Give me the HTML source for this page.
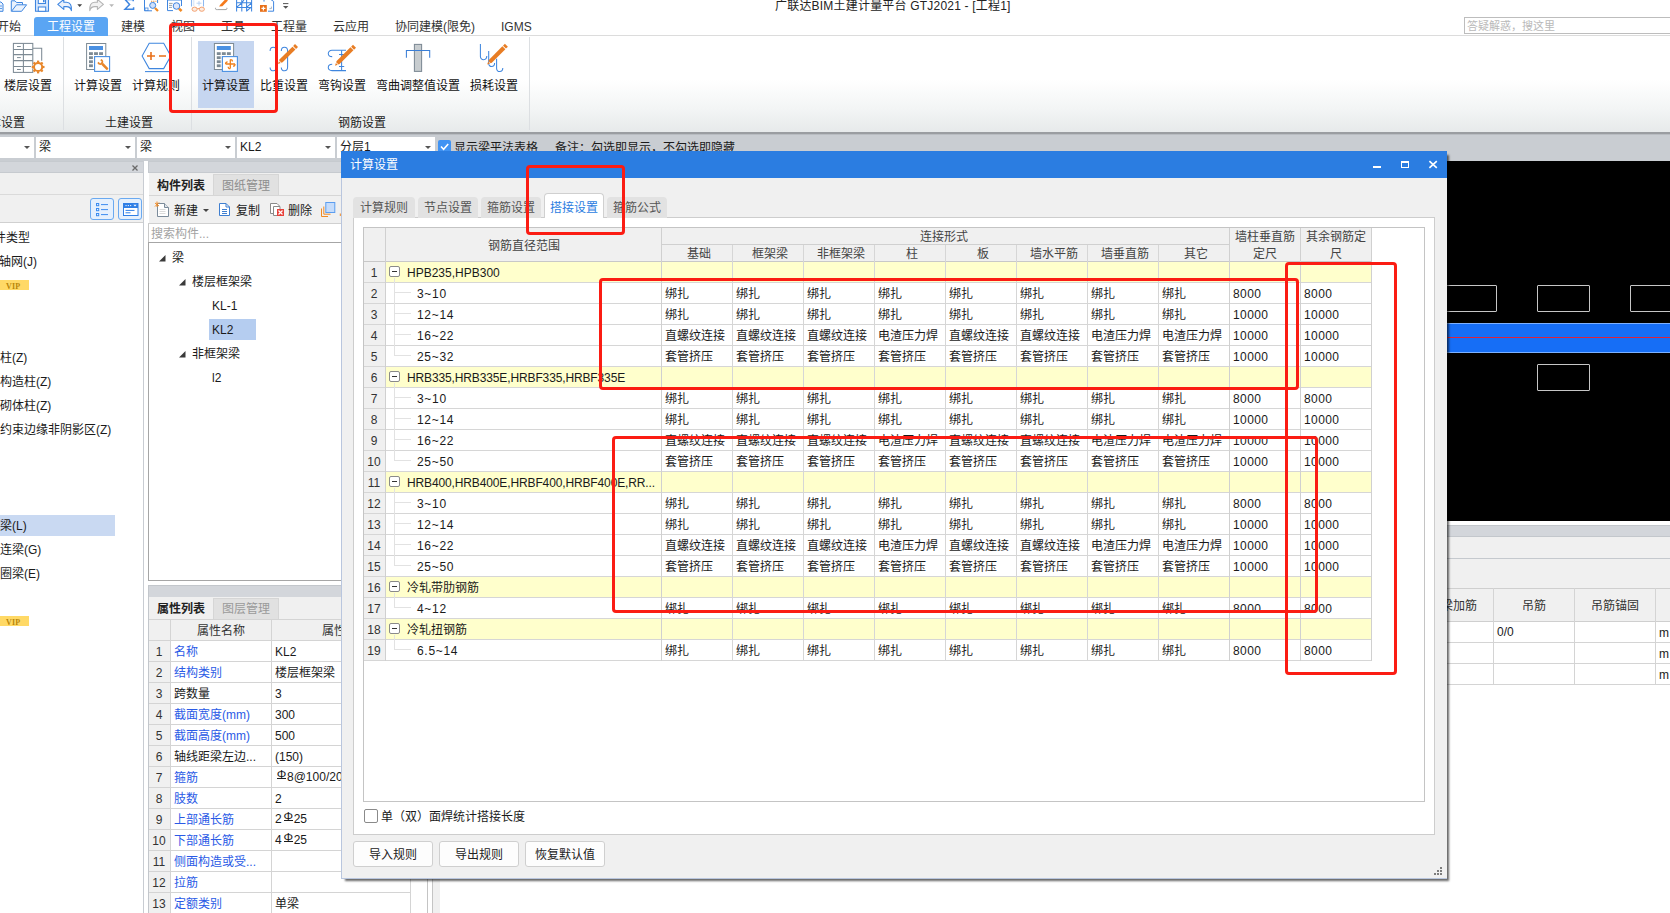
<!DOCTYPE html><html lang="zh-CN"><head><meta charset="utf-8"><title>计算设置</title><style>
*{box-sizing:border-box;margin:0;padding:0}
html,body{width:1670px;height:913px;overflow:hidden;background:#fff}
body{position:relative;font-family:"Liberation Sans","Noto Sans CJK SC",sans-serif;font-size:12px;color:#1a1a1a;line-height:16px}
.a{position:absolute}
.t{position:absolute;white-space:nowrap;line-height:16px;height:16px}
.c{text-align:center}
.r{text-align:right}
.b{font-weight:bold}
.blue{color:#2a5ae6}
.gray{color:#8c8c8c}
.red{position:absolute;border:3px solid #fb1c13;border-radius:4px;background:transparent}
.combo{position:absolute;background:#fff;height:21px;top:137px}
.combo span{position:absolute;left:3px;top:2px;line-height:16px}
.combo i{position:absolute;right:4px;top:9px;width:0;height:0;border-left:3px solid transparent;border-right:3px solid transparent;border-top:3.5px solid #555}
.tab{position:absolute;top:197px;height:21px;background:#e2e2e2;color:#555;border-radius:4px 4px 0 0;text-align:center;line-height:22px;width:62px}
.tabA{position:absolute;top:193px;height:25px;background:#fff;color:#2b7de1;border:1px solid #d0d0d0;border-bottom:none;border-radius:4px 4px 0 0;text-align:center;line-height:26px;padding-top:1px;width:60px}
.btn{position:absolute;top:841px;height:26px;width:80px;background:#fdfdfd;border:1px solid #cfcfcf;border-radius:3px;text-align:center;line-height:26px;color:#222}
.sym{display:inline-block;position:relative;margin-left:1px;width:11px;height:10px;vertical-align:top}
.sym i{position:absolute;left:0px;top:-1px;font-style:normal;font-size:12px;line-height:12px;width:11px;text-align:center;transform:scaleY(0.9);transform-origin:50% 100%}
.sym::after{content:"";position:absolute;left:1px;top:9px;width:9px;height:1px;background:#1a1a1a}
.hl{position:absolute;height:1px;background:#d4d4d4}
.vl{position:absolute;width:1px;background:#d4d4d4}
</style></head><body><div class="a" style="left:0px;top:0px;width:1670px;height:36px;background:#fff"></div><div class="t " style="left:775px;top:-2px;color:#222;letter-spacing:0.2px">广联达BIM土建计量平台 GTJ2021 - [工程1]</div><div class="t " style="left:-3px;top:19px;color:#333">开始</div><div class="t " style="left:47px;top:19px;color:#fff">工程设置</div><div class="t " style="left:121px;top:19px;color:#333">建模</div><div class="t " style="left:171px;top:19px;color:#333">视图</div><div class="t " style="left:221px;top:19px;color:#333">工具</div><div class="t " style="left:271px;top:19px;color:#333">工程量</div><div class="t " style="left:333px;top:19px;color:#333">云应用</div><div class="t " style="left:395px;top:19px;color:#333">协同建模(限免)</div><div class="t " style="left:501px;top:19px;color:#333">IGMS</div><div class="hl" style="left:0px;top:35px;width:1670px;background:#dcdcdc"></div><div class="a" style="left:34px;top:17px;width:74px;height:19px;background:#5aa5f3;border-radius:3px 3px 0 0"></div><div class="t " style="left:47px;top:19px;color:#fff">工程设置</div><div class="a" style="left:1464px;top:17px;width:210px;height:17px;background:#fff;border:1px solid #bdbdbd"></div><div class="t " style="left:1467px;top:18px;color:#b9b9b9;font-size:11px">答疑解惑，搜这里</div><div class="a" style="left:0px;top:36px;width:1670px;height:97px;background:linear-gradient(#ffffff 0%,#ffffff 45%,#f3f5f5 75%,#e6e9ea 100%)"></div><div class="a" style="left:0px;top:132px;width:1670px;height:2px;background:#9a9da1"></div><div class="a" style="left:0px;top:134px;width:1670px;height:1px;background:#b8bcc1"></div><div class="vl" style="left:63px;top:37px;height:93px;background:#dcdfe2"></div><div class="vl" style="left:191px;top:37px;height:93px;background:#dcdfe2"></div><div class="vl" style="left:529px;top:37px;height:93px;background:#dcdfe2"></div><div class="a" style="left:198px;top:41px;width:56px;height:67px;background:#c6d6f0"></div><div class="t c " style="left:-122px;top:78px;width:300px;color:#111">楼层设置</div><div class="t c " style="left:-52px;top:78px;width:300px;color:#111">计算设置</div><div class="t c " style="left:6px;top:78px;width:300px;color:#111">计算规则</div><div class="t c " style="left:76px;top:78px;width:300px;color:#111">计算设置</div><div class="t c " style="left:134px;top:78px;width:300px;color:#111">比重设置</div><div class="t c " style="left:192px;top:78px;width:300px;color:#111">弯钩设置</div><div class="t c " style="left:268px;top:78px;width:300px;color:#111">弯曲调整值设置</div><div class="t c " style="left:344px;top:78px;width:300px;color:#111">损耗设置</div><div class="t " style="left:-23px;top:115px;color:#222">基本设置</div><div class="t c " style="left:-21px;top:115px;width:300px;color:#222">土建设置</div><div class="t c " style="left:212px;top:115px;width:300px;color:#222">钢筋设置</div><svg class="a" style="left:0;top:0" width="560" height="134" viewBox="0 0 560 134"><g fill="none" stroke="#7d8a94" stroke-width="1.05"><path d="M32.8 48.3 H41.7 V60.8"/><rect x="13.4" y="43.4" width="19.4" height="29"/><path d="M23.4 43.4 V72.4 M13.4 49.5 H32.8 M13.4 54.6 H32.8 M13.4 60.6 H32.8 M13.4 66.4 H31"/><path d="M17 46.5 H20.8 M17 57.6 H20.8 M17 69.5 H20.8" stroke-width="1"/></g><circle cx="38.1" cy="67.0" r="5.6" fill="#fff"/><circle cx="38.1" cy="67.0" r="4.1" fill="none" stroke="#e8862a" stroke-width="2"/><rect x="-1.10" y="-1.00" width="2.2" height="2" fill="#e8862a" transform="translate(43.50,67.00) rotate(90.0)"/><rect x="-1.10" y="-1.00" width="2.2" height="2" fill="#e8862a" transform="translate(41.92,70.82) rotate(135.0)"/><rect x="-1.10" y="-1.00" width="2.2" height="2" fill="#e8862a" transform="translate(38.10,72.40) rotate(180.0)"/><rect x="-1.10" y="-1.00" width="2.2" height="2" fill="#e8862a" transform="translate(34.28,70.82) rotate(225.0)"/><rect x="-1.10" y="-1.00" width="2.2" height="2" fill="#e8862a" transform="translate(32.70,67.00) rotate(270.0)"/><rect x="-1.10" y="-1.00" width="2.2" height="2" fill="#e8862a" transform="translate(34.28,63.18) rotate(315.0)"/><rect x="-1.10" y="-1.00" width="2.2" height="2" fill="#e8862a" transform="translate(38.10,61.60) rotate(360.0)"/><rect x="-1.10" y="-1.00" width="2.2" height="2" fill="#e8862a" transform="translate(41.92,63.18) rotate(405.0)"/><rect x="86.6" y="43.5" width="19.2" height="26" fill="#fff" stroke="#7d8a94" stroke-width="1"/><rect x="89" y="46" width="14" height="4" fill="#4a90e2"/><rect x="89.00" y="52.20" width="3.9" height="2.8" fill="#7d8a94"/><rect x="94.05" y="52.20" width="3.9" height="2.8" fill="#7d8a94"/><rect x="99.10" y="52.20" width="3.9" height="2.8" fill="#7d8a94"/><rect x="89.00" y="56.25" width="3.9" height="2.8" fill="#7d8a94"/><rect x="94.05" y="56.25" width="3.9" height="2.8" fill="#7d8a94"/><rect x="99.10" y="56.25" width="3.9" height="2.8" fill="#7d8a94"/><rect x="89.00" y="60.30" width="3.9" height="2.8" fill="#7d8a94"/><rect x="94.05" y="60.30" width="3.9" height="2.8" fill="#7d8a94"/><rect x="99.10" y="60.30" width="3.9" height="2.8" fill="#7d8a94"/><rect x="89.00" y="64.35" width="3.9" height="2.8" fill="#7d8a94"/><rect x="94.05" y="64.35" width="3.9" height="2.8" fill="#7d8a94"/><rect x="99.10" y="64.35" width="3.9" height="2.8" fill="#7d8a94"/><rect x="94.6" y="56.6" width="15" height="14.8" fill="#fff" stroke="#4a90e2" stroke-width="1.1"/><g transform="translate(102.8,64.4) rotate(-45)"><rect x="-1.25" y="-1" width="2.5" height="8" rx="0.8" fill="#e8862a"/><path d="M-2.9 -4.8 A3.1 3.1 0 1 0 2.9 -4.8 L1.2 -4.8 L1.2 -2.6 L-1.2 -2.6 L-1.2 -4.8 Z" fill="#e8862a"/></g><path d="M142.1 56 L149.2 43.3 H163.7 L170.8 56 L163.7 68.6 H149.2 Z" fill="none" stroke="#3f86de" stroke-width="1.05"/><path d="M145 71.6 H170" stroke="#3f86de" stroke-width="1.05"/><path d="M147 56 H155 M151 52 V60 M159 56 H166" stroke="#e8701a" stroke-width="1.6" fill="none"/><rect x="214.4" y="43.5" width="19.2" height="26" fill="#fff" stroke="#7d8a94" stroke-width="1"/><rect x="216.8" y="46" width="14" height="4" fill="#4a90e2"/><rect x="216.80" y="52.20" width="3.9" height="2.8" fill="#7d8a94"/><rect x="221.85" y="52.20" width="3.9" height="2.8" fill="#7d8a94"/><rect x="226.90" y="52.20" width="3.9" height="2.8" fill="#7d8a94"/><rect x="216.80" y="56.25" width="3.9" height="2.8" fill="#7d8a94"/><rect x="221.85" y="56.25" width="3.9" height="2.8" fill="#7d8a94"/><rect x="226.90" y="56.25" width="3.9" height="2.8" fill="#7d8a94"/><rect x="216.80" y="60.30" width="3.9" height="2.8" fill="#7d8a94"/><rect x="221.85" y="60.30" width="3.9" height="2.8" fill="#7d8a94"/><rect x="226.90" y="60.30" width="3.9" height="2.8" fill="#7d8a94"/><rect x="216.80" y="64.35" width="3.9" height="2.8" fill="#7d8a94"/><rect x="221.85" y="64.35" width="3.9" height="2.8" fill="#7d8a94"/><rect x="226.90" y="64.35" width="3.9" height="2.8" fill="#7d8a94"/><rect x="222.4" y="56.6" width="15" height="14.8" fill="#fff" stroke="#4a90e2" stroke-width="1.1"/><g fill="none" stroke="#f0801c" stroke-width="1.3"><path d="M225.6 64 H235 M230.3 59.6 V68.6"/><path d="M227.6 61.8 q-2 0 -2 2.2 M233 66.2 q2 0 2 -2.2 M232.4 61.4 q0 -1.9 -2.1 -1.8 M228.2 66.8 q0 1.9 2.1 1.8"/></g><path d="M270.09999999999997 51 C270.09999999999997 46 276.4 46 276.4 51 V67 C276.4 72 270.09999999999997 72 270.09999999999997 67.5" fill="none" stroke="#3f86de" stroke-width="1.05"/><path d="M281.3 51 C281.3 46 287.6 46 287.6 51 V67 C287.6 72 281.3 72 281.3 67.5" fill="none" stroke="#3f86de" stroke-width="1.05"/><polygon points="278.00,63.90 280.76,63.00 278.93,61.15" fill="#e87d24"/><polygon points="281.53,62.77 282.60,62.30 295.42,49.62 292.46,46.64 279.65,59.31 279.16,60.38" fill="#e87d24"/><polygon points="296.06,48.99 297.98,47.09 295.02,44.11 293.10,46.01" fill="#e87d24"/><g fill="none" stroke="#3f86de" stroke-width="1.05"><path d="M346 50.3 H332 C327 50.3 327 56.6 332.2 56.6"/><path d="M346 70.6 H332 C327 70.6 327 64.3 332.2 64.3"/><path d="M341.6 50.3 V70.6 M339 54.5 H344.2 M339 66.5 H344.2"/></g><polygon points="335.00,65.70 337.76,64.79 335.92,62.94" fill="#e87d24"/><polygon points="338.52,64.56 339.60,64.09 353.43,50.33 350.47,47.35 336.64,61.11 336.15,62.18" fill="#e87d24"/><polygon points="354.07,49.69 355.98,47.79 353.02,44.81 351.10,46.72" fill="#e87d24"/><rect x="414.4" y="44.4" width="7.2" height="27" fill="#c7cccf" stroke="#7d8a94" stroke-width="1.05"/><path d="M406.4 57.8 V50.4 H429.7 V57.8" fill="none" stroke="#3a7ed6" stroke-width="1.05"/><g fill="none" stroke="#3f86de" stroke-width="1.05"><path d="M480.4 44 V56.6 C480.4 60.8 486.8 60.8 486.8 56"/><path d="M488.7 51 V63.4 C488.7 67.6 494.6 67.6 494.6 63"/><path d="M496.6 58.7 V68.5 C496.6 72.7 502.8 72.7 502.8 68"/></g><polygon points="487.20,64.50 489.96,63.58 488.11,61.74" fill="#e87d24"/><polygon points="490.72,63.35 491.79,62.86 505.35,49.23 502.37,46.27 488.81,59.90 488.34,60.98" fill="#e87d24"/><polygon points="505.98,48.60 507.89,46.68 504.91,43.72 503.01,45.63" fill="#e87d24"/></svg><svg class="a" style="left:0;top:0" width="300" height="14" viewBox="0 0 300 14"><path d="M-3 2 H1 L3 4 V11.3 H-3" fill="#eaf2fd" stroke="#3f86e0" stroke-width="1"/><path d="M-2 6 H2 M-2 8.5 H2" stroke="#3f86e0" stroke-width="0.8"/><path d="M11.3 11.3 V0.8 H15 L16.5 2.5 H22.5 V4.8" fill="#eaf2fd" stroke="#3f86e0" stroke-width="1"/><path d="M11.5 11.3 L16.5 4.8 H26.6 L21.6 11.3 Z" fill="#eaf2fd" stroke="#3f86e0" stroke-width="1"/><path d="M35.5 -1 V11.3 H48.5 V-1" fill="#d9e8fc" stroke="#3f86e0" stroke-width="1.1"/><rect x="38.3" y="-1" width="7.2" height="4.5" fill="#fff" stroke="#3f86e0" stroke-width="1.05"/><rect x="43" y="-1" width="1.6" height="3.2" fill="#3f86e0"/><rect x="38.3" y="7" width="7.4" height="4.3" fill="#fff" stroke="#3f86e0" stroke-width="1.05"/><path d="M57.8 4.4 L63.8 -0.6 V2.2 H66.5 C70.5 2.2 71.6 5.5 71.4 10.6 C70.6 7.2 69 6.6 66.5 6.6 H63.8 V9.4 Z" fill="#eaf2fd" stroke="#3f86e0" stroke-width="1.1" stroke-linejoin="round"/><path d="M77.3 4.2 H82.1 L79.7 7 Z" fill="#444"/><path d="M103.4 4.4 L97.4 -0.6 V2.2 H94.7 C90.7 2.2 89.6 5.5 89.8 10.6 C90.6 7.2 92.2 6.6 94.7 6.6 H97.4 V9.4 Z" fill="#f2f2f2" stroke="#b4b4b4" stroke-width="1.1" stroke-linejoin="round"/><path d="M109.2 4.2 H114 L111.6 7 Z" fill="#b8b8b8"/><path d="M133.2 1.2 V-0.6 H125 L129.6 4.4 L125 9.2 H133.6 V7.2" fill="none" stroke="#3f86e0" stroke-width="1.5"/><path d="M144.5 -1 V10.8 H152 M157.6 -1 V3" fill="none" stroke="#3f86e0" stroke-width="1"/><rect x="145" y="8" width="3" height="2.6" fill="#fff" stroke="#3f86e0" stroke-width="0.8"/><circle cx="152.7" cy="5.4" r="3" fill="#cfe0fa" stroke="#3f86e0" stroke-width="1"/><path d="M155 8 L158 11" stroke="#f08a24" stroke-width="2.2"/><path d="M151 1.2 H152.2 M153.2 1.2 H154.4 M155.4 1.2 H156.4" stroke="#f08a24" stroke-width="1.05"/><path d="M167.5 10.6 V0 H181.5 V6" fill="none" stroke="#3f86e0" stroke-width="1"/><path d="M167.5 10.6 H173" stroke="#3f86e0" stroke-width="1"/><path d="M169 3.4 H172.6 M169 5.4 H172 M169 7.4 H172" stroke="#7d8a94" stroke-width="0.8"/><circle cx="176.5" cy="6" r="3.3" fill="#dbe6fb" stroke="#3f86e0" stroke-width="1"/><path d="M179 8.6 L181.6 11" stroke="#f08a24" stroke-width="2.6"/><path d="M191.5 0 V6.5 M203.5 0 V6.5" stroke="#8db8f0" stroke-width="1.05"/><path d="M192.8 1 H194.4 M192.8 3 H194.4 M192.8 5 H194.4 M196.5 3.2 H201.5 M199 1 V5.6" stroke="#a9c9f3" stroke-width="0.8" fill="none"/><ellipse cx="194.6" cy="9.2" rx="2.6" ry="2.1" fill="#fdece0" stroke="#f3a273" stroke-width="1"/><ellipse cx="201.8" cy="9.2" rx="2.6" ry="2.1" fill="#fdece0" stroke="#f3a273" stroke-width="1"/><path d="M197.2 8.6 H199.2" stroke="#f3a273" stroke-width="1.05"/><path d="M219 6.6 L220.4 4.6 L225.6 -1 L228 0.6 L222.4 6.2 Z" fill="#f57a1c"/><path d="M215.6 7.8 C215.2 9.6 216 9.6 217.5 9.6 H225 C226.6 9.6 227.2 9.4 226.8 7.8" fill="none" stroke="#8a8a8a" stroke-width="0.8"/><path d="M236.6 -1 V11.6 M241.8 -1 V11.6 M246.6 -1 V11.6 M251.6 -1 V11.6 M236.6 2.8 H251.6 M236.6 7.4 H251.6 M236.6 7.4 L241.8 2.8 M246.6 7.4 L251.6 2.8 M241.8 2.8 L244 0 M246.6 11 L251 7.4" fill="none" stroke="#3f86e0" stroke-width="1.05"/><path d="M264 1.6 V-1 M270 -1 L273.6 1.4 V11.2 H268" fill="none" stroke="#3f86e0" stroke-width="1"/><path d="M269.4 8.6 H271.4 V6.6" fill="none" stroke="#8a9aa8" stroke-width="0.7"/><rect x="260" y="5" width="6.8" height="6.8" fill="#e8701a"/><path d="M261.4 8.4 H265.4 M263.4 6.4 V10.4" stroke="#fff" stroke-width="1.2"/><path d="M283 3.6 H288.4" stroke="#555" stroke-width="1"/><path d="M283 6 H288.4 L285.7 8.8 Z" fill="#555"/></svg><div class="a" style="left:0px;top:135px;width:1670px;height:26px;background:#c9cdd2"></div><div class="combo" style="left:-60px;width:94px"><span></span><i></i></div><div class="combo" style="left:36px;width:99px"><span>梁</span><i></i></div><div class="combo" style="left:137px;width:98px"><span>梁</span><i></i></div><div class="combo" style="left:237px;width:98px"><span>KL2</span><i></i></div><div class="combo" style="left:337px;width:98px"><span>分层1</span><i></i></div><div class="a" style="left:438px;top:140px;width:13px;height:13px;background:#4093f3;border-radius:2px"></div><svg class="a" style="left:438px;top:140px" width="13" height="13"><path d="M3 6.5 L5.6 9.2 L10.2 4" stroke="#fff" stroke-width="1.6" fill="none"/></svg><div class="t " style="left:454px;top:140px;">显示梁平法表格</div><div class="t " style="left:555px;top:140px;">备注：勾选即显示，不勾选即隐藏</div><div class="a" style="left:0px;top:161px;width:144px;height:752px;background:#fff"></div><div class="a" style="left:-1px;top:161px;width:145px;height:12px;background:#d3d6db;border:1px solid #c6cacf"></div><svg class="a" style="left:132px;top:165px" width="7" height="7"><path d="M0.5 0.5 L5.5 5.5 M5.5 0.5 L0.5 5.5" stroke="#6a6a6a" stroke-width="1.3" fill="none"/></svg><div class="a" style="left:0px;top:173px;width:144px;height:50px;background:#f0f0f0"></div><div class="hl" style="left:0px;top:194px;width:144px;background:#dadada"></div><div class="hl" style="left:0px;top:222px;width:144px;background:#d0d0d0"></div><div class="vl" style="left:143px;top:161px;height:752px;background:#c8ccd2"></div><div class="a" style="left:90px;top:198px;width:24px;height:22px;background:#e5f0fd;border:1px solid #6aa9f0;border-radius:3px"></div><div class="a" style="left:118px;top:198px;width:24px;height:22px;background:#e5f0fd;border:1px solid #6aa9f0;border-radius:3px"></div><svg class="a" style="left:90px;top:198px" width="24" height="22"><g stroke="#3c8cf0" stroke-width="1" fill="none"><rect x="6.5" y="5.5" width="2.2" height="2.2"/><rect x="6.5" y="10.5" width="2.2" height="2.2"/><rect x="6.5" y="15.5" width="2.2" height="2.2"/><path d="M11 6.6 H18 M11 11.6 H18 M11 16.6 H18"/></g></svg><svg class="a" style="left:118px;top:198px" width="24" height="22"><rect x="5.5" y="5.5" width="14.5" height="12" fill="#fff" stroke="#2f7fe6" stroke-width="1"/><rect x="5.5" y="5.5" width="14.5" height="4.5" fill="#2f7fe6"/><path d="M7.5 7.6 H8.6 M9.8 7.6 H10.9 M12.1 7.6 H13.2" stroke="#fff" stroke-width="1"/><path d="M15.4 6.8 H18.6 L17 8.6 Z" fill="#fff"/><path d="M7.5 12.4 H16.5 M7.5 14.8 H12.5" stroke="#2f7fe6" stroke-width="1"/></svg><div class="t " style="left:-6px;top:230px;">件类型</div><div class="t " style="left:-1px;top:254px;">轴网(J)</div><div class="a" style="left:0px;top:280px;width:29px;height:10px;background:#ffd966"></div><div class="t" style="left:6px;top:278.5px;font-family:'Liberation Serif',serif;font-size:8px;font-weight:bold;color:#b8860b;letter-spacing:0.2px">VIP</div><div class="t " style="left:0px;top:350px;">柱(Z)</div><div class="t " style="left:0px;top:374px;">构造柱(Z)</div><div class="t " style="left:0px;top:398px;">砌体柱(Z)</div><div class="t " style="left:0px;top:422px;">约束边缘非阴影区(Z)</div><div class="a" style="left:0px;top:515px;width:115px;height:21px;background:#c9d9f2"></div><div class="t " style="left:0px;top:518px;">梁(L)</div><div class="t " style="left:0px;top:542px;">连梁(G)</div><div class="t " style="left:0px;top:566px;">圈梁(E)</div><div class="a" style="left:0px;top:616px;width:29px;height:10px;background:#ffd966"></div><div class="t" style="left:6px;top:614.5px;font-family:'Liberation Serif',serif;font-size:8px;font-weight:bold;color:#b8860b;letter-spacing:0.2px">VIP</div><div class="a" style="left:144px;top:161px;width:5px;height:752px;background:#fff"></div><div class="a" style="left:148px;top:161px;width:263px;height:12px;background:#d3d6db;border:1px solid #c6cacf"></div><div class="a" style="left:149px;top:173px;width:262px;height:50px;background:#f0f0f0"></div><div class="a" style="left:149px;top:173px;width:65px;height:23px;background:#f0f0f0"></div><div class="a" style="left:213px;top:174px;width:66px;height:22px;background:#e1e1e1;border:1px solid #d6d6d6"></div><div class="t c b" style="left:31px;top:178px;width:300px;color:#222">构件列表</div><div class="t c " style="left:96px;top:178px;width:300px;color:#8e8e8e">图纸管理</div><div class="hl" style="left:149px;top:195px;width:262px;background:#d6d6d6"></div><div class="t " style="left:174px;top:203px;">新建</div><div class="t " style="left:236px;top:203px;">复制</div><div class="t " style="left:288px;top:203px;">删除</div><div class="a" style="left:203px;top:209px;width:0;height:0;border-left:3px solid transparent;border-right:3px solid transparent;border-top:3px solid #444"></div><svg class="a" style="left:154px;top:201px" width="16" height="16"><path d="M3.5 2.5 H10.5 L14.5 6.5 V15.5 H3.5 Z" fill="#fff" stroke="#7b8b9a"/><path d="M10.5 2.5 V6.5 H14.5" fill="#dfe4e9" stroke="#7b8b9a"/><path d="M5.5 8.5 H11.5 M5.5 10.5 H11.5 M5.5 12.5 H11.5" stroke="#d0d0d0" stroke-width="0.8"/><path d="M1 2 L5 5 M5 1.5 L1 5.5 M3 0.5 V6" stroke="#f08a24" stroke-width="1"/></svg><svg class="a" style="left:217px;top:201px" width="16" height="16"><path d="M2.5 2.5 H9 L12.5 6 V14.5 H2.5 Z" fill="#fff" stroke="#3f7fd0"/><path d="M9 2.5 V6 H12.5 M5 8.5 H10 M5 10.5 H10 M5 12.5 H10" fill="none" stroke="#3f7fd0"/></svg><svg class="a" style="left:268px;top:201px" width="18" height="16"><path d="M2.5 2.5 H9 L11.5 5 V12.5 H2.5 Z" fill="#fff" stroke="#8a8a8a"/><path d="M5.5 5.5 H12 V14.5 H5.5 Z" fill="#fff" stroke="#8a8a8a"/><rect x="9" y="8" width="7" height="7" fill="#e8403a"/><path d="M10.5 9.5 L14.5 13.5 M14.5 9.5 L10.5 13.5" stroke="#fff" stroke-width="1.2"/></svg><svg class="a" style="left:320px;top:201px" width="21" height="17"><path d="M1.5 7.5 V15.5 H8" fill="none" stroke="#f08a24"/><path d="M3.8 5.5 V13.2 H10.5" fill="none" stroke="#f08a24"/><rect x="5.8" y="1.5" width="9" height="10" fill="#c5dcfb" stroke="#5b9df0"/><path d="M20.3 12.5 V15" stroke="#f08a24" stroke-width="1"/></svg><div class="a" style="left:148px;top:223px;width:263px;height:20px;background:#fff;border:1px solid #c9c9c9;border-top:1px solid #d0d0d0"></div><div class="t " style="left:151px;top:226px;color:#a3a3a3">搜索构件...</div><div class="a" style="left:148px;top:242px;width:263px;height:339px;background:#fff;border:1px solid #a6a6a6"></div><svg class="a" style="left:159px;top:255px" width="7" height="7"><path d="M6.5 0 V6.5 H0 Z" fill="#3a3a3a"/></svg><div class="t " style="left:172px;top:250px;">梁</div><svg class="a" style="left:179px;top:279px" width="7" height="7"><path d="M6.5 0 V6.5 H0 Z" fill="#3a3a3a"/></svg><div class="t " style="left:192px;top:274px;">楼层框架梁</div><div class="t " style="left:212px;top:298px;">KL-1</div><div class="a" style="left:209px;top:319px;width:47px;height:21px;background:#b5cdf0"></div><div class="t " style="left:212px;top:322px;">KL2</div><svg class="a" style="left:179px;top:351px" width="7" height="7"><path d="M6.5 0 V6.5 H0 Z" fill="#3a3a3a"/></svg><div class="t " style="left:192px;top:346px;">非框架梁</div><div class="t " style="left:212px;top:370px;">l2</div><div class="a" style="left:148px;top:585px;width:263px;height:13px;background:#d3d6db;border:1px solid #c3c7cc"></div><div class="a" style="left:149px;top:597px;width:262px;height:23px;background:#f0f0f0"></div><div class="a" style="left:213px;top:598px;width:66px;height:22px;background:#e1e1e1;border:1px solid #d6d6d6"></div><div class="t c b" style="left:31px;top:601px;width:300px;color:#222">属性列表</div><div class="t c " style="left:96px;top:601px;width:300px;color:#9a9a9a">图层管理</div><div class="a" style="left:149px;top:619px;width:262px;height:294px;background:#fff"></div><div class="a" style="left:149px;top:619px;width:262px;height:22px;background:#f0f0f0"></div><div class="a" style="left:149px;top:640px;width:22px;height:273px;background:#f0f0f0"></div><div class="hl" style="left:149px;top:619px;width:262px;background:#d4d4d4"></div><div class="hl" style="left:149px;top:640px;width:262px;background:#d4d4d4"></div><div class="hl" style="left:149px;top:661px;width:262px;background:#d4d4d4"></div><div class="hl" style="left:149px;top:682px;width:262px;background:#d4d4d4"></div><div class="hl" style="left:149px;top:703px;width:262px;background:#d4d4d4"></div><div class="hl" style="left:149px;top:724px;width:262px;background:#d4d4d4"></div><div class="hl" style="left:149px;top:745px;width:262px;background:#d4d4d4"></div><div class="hl" style="left:149px;top:766px;width:262px;background:#d4d4d4"></div><div class="hl" style="left:149px;top:787px;width:262px;background:#d4d4d4"></div><div class="hl" style="left:149px;top:808px;width:262px;background:#d4d4d4"></div><div class="hl" style="left:149px;top:829px;width:262px;background:#d4d4d4"></div><div class="hl" style="left:149px;top:850px;width:262px;background:#d4d4d4"></div><div class="hl" style="left:149px;top:871px;width:262px;background:#d4d4d4"></div><div class="hl" style="left:149px;top:892px;width:262px;background:#d4d4d4"></div><div class="vl" style="left:148px;top:597px;height:316px;background:#c3c7cc"></div><div class="vl" style="left:170px;top:619px;height:294px;background:#d4d4d4"></div><div class="vl" style="left:271px;top:619px;height:294px;background:#d4d4d4"></div><div class="vl" style="left:410px;top:597px;height:316px;background:#d4d4d4"></div><div class="t c " style="left:71px;top:623px;width:300px;color:#333">属性名称</div><div class="t " style="left:322px;top:623px;color:#333">属性值</div><div class="t c " style="left:9px;top:644px;width:300px;color:#333">1</div><div class="t blue" style="left:174px;top:644px;">名称</div><div class="t " style="left:275px;top:644px;">KL2</div><div class="t c " style="left:9px;top:665px;width:300px;color:#333">2</div><div class="t blue" style="left:174px;top:665px;">结构类别</div><div class="t " style="left:275px;top:665px;">楼层框架梁</div><div class="t c " style="left:9px;top:686px;width:300px;color:#333">3</div><div class="t " style="left:174px;top:686px;">跨数量</div><div class="t " style="left:275px;top:686px;">3</div><div class="t c " style="left:9px;top:707px;width:300px;color:#333">4</div><div class="t blue" style="left:174px;top:707px;">截面宽度(mm)</div><div class="t " style="left:275px;top:707px;">300</div><div class="t c " style="left:9px;top:728px;width:300px;color:#333">5</div><div class="t blue" style="left:174px;top:728px;">截面高度(mm)</div><div class="t " style="left:275px;top:728px;">500</div><div class="t c " style="left:9px;top:749px;width:300px;color:#333">6</div><div class="t " style="left:174px;top:749px;">轴线距梁左边...</div><div class="t " style="left:275px;top:749px;">(150)</div><div class="t c " style="left:9px;top:770px;width:300px;color:#333">7</div><div class="t blue" style="left:174px;top:770px;">箍筋</div><div class="t " style="left:275px;top:768.5px;"><span class="sym"><i>Φ</i></span>8@100/200(2)</div><div class="t c " style="left:9px;top:791px;width:300px;color:#333">8</div><div class="t blue" style="left:174px;top:791px;">肢数</div><div class="t " style="left:275px;top:791px;">2</div><div class="t c " style="left:9px;top:812px;width:300px;color:#333">9</div><div class="t blue" style="left:174px;top:812px;">上部通长筋</div><div class="t " style="left:275px;top:810.5px;">2<span class="sym"><i>Φ</i></span>25</div><div class="t c " style="left:9px;top:833px;width:300px;color:#333">10</div><div class="t blue" style="left:174px;top:833px;">下部通长筋</div><div class="t " style="left:275px;top:831.5px;">4<span class="sym"><i>Φ</i></span>25</div><div class="t c " style="left:9px;top:854px;width:300px;color:#333">11</div><div class="t blue" style="left:174px;top:854px;">侧面构造或受...</div><div class="t " style="left:275px;top:854px;"></div><div class="t c " style="left:9px;top:875px;width:300px;color:#333">12</div><div class="t blue" style="left:174px;top:875px;">拉筋</div><div class="t " style="left:275px;top:875px;"></div><div class="t c " style="left:9px;top:896px;width:300px;color:#333">13</div><div class="t blue" style="left:174px;top:896px;">定额类别</div><div class="t " style="left:275px;top:896px;">单梁</div><div class="a" style="left:411px;top:161px;width:1259px;height:752px;background:#fff"></div><div class="vl" style="left:427px;top:161px;height:752px;background:#c4c4c4"></div><div class="a" style="left:432px;top:161px;width:8px;height:752px;background:#f0f0f0"></div><div class="vl" style="left:432px;top:161px;height:752px;background:#c4c4c4"></div><div class="a" style="left:1440px;top:161px;width:230px;height:360px;background:#000"></div><div class="a" style="left:1440px;top:285px;width:57px;height:27px;border:1px solid #c6c6c6;border-radius:1px"></div><div class="a" style="left:1537px;top:285px;width:53px;height:27px;border:1px solid #c6c6c6;border-radius:1px"></div><div class="a" style="left:1630px;top:285px;width:54px;height:27px;border:1px solid #c6c6c6;border-radius:1px"></div><div class="a" style="left:1537px;top:364px;width:53px;height:27px;border:1px solid #c6c6c6;border-radius:1px"></div><div class="a" style="left:1440px;top:323px;width:230px;height:30px;background:#166ef6;border-top:1px solid #7db1ff;border-bottom:1px solid #7db1ff"></div><div class="a" style="left:1440px;top:337px;width:230px;height:1px;background:#e0223a"></div><div class="a" style="left:1440px;top:521px;width:230px;height:4px;background:#fff"></div><div class="a" style="left:1440px;top:525px;width:230px;height:12px;background:#d3d6db;border-top:1px solid #c3c7cc;border-bottom:1px solid #c3c7cc"></div><div class="a" style="left:1440px;top:537px;width:230px;height:51px;background:#f0f0f0"></div><div class="hl" style="left:1440px;top:558px;width:230px;background:#c5c9ce"></div><div class="a" style="left:1440px;top:588px;width:230px;height:34px;background:#f0f0f0;border-top:1px solid #cfcfcf;border-bottom:1px solid #cfcfcf"></div><div class="hl" style="left:1440px;top:642px;width:230px;background:#d4d4d4"></div><div class="hl" style="left:1440px;top:663px;width:230px;background:#d4d4d4"></div><div class="hl" style="left:1440px;top:684px;width:230px;background:#d4d4d4"></div><div class="vl" style="left:1493px;top:588px;height:97px;background:#d4d4d4"></div><div class="vl" style="left:1574px;top:588px;height:97px;background:#d4d4d4"></div><div class="vl" style="left:1655px;top:588px;height:97px;background:#d4d4d4"></div><div class="t " style="left:1441px;top:598px;color:#333">梁加筋</div><div class="t c " style="left:1384px;top:598px;width:300px;color:#333">吊筋</div><div class="t c " style="left:1465px;top:598px;width:300px;color:#333">吊筋锚固</div><div class="t " style="left:1497px;top:624px;">0/0</div><div class="t " style="left:1659px;top:625px;">m</div><div class="t " style="left:1659px;top:646px;">m</div><div class="t " style="left:1659px;top:667px;">m</div><div class="a" style="left:341px;top:151px;width:1106px;height:728px;background:#f0f0f0;box-shadow:3px 3px 2px -1px rgba(0,0,0,0.6);border-left:1px solid #b9c6de;border-bottom:1px solid #b9c6de"></div><div class="a" style="left:341px;top:151px;width:1106px;height:27px;background:#2b7de1"></div><div class="t " style="left:350px;top:157px;color:#fff">计算设置</div><div class="a" style="left:1373px;top:166px;width:8px;height:2px;background:#fff"></div><div class="a" style="left:1401px;top:161px;width:8px;height:7px;border:1px solid #fff;border-top:2px solid #fff"></div><svg class="a" style="left:1428px;top:160px" width="10" height="9"><path d="M1.4 1.2 L8.8 7.8 M8.8 1.2 L1.4 7.8" stroke="#fff" stroke-width="1.7" fill="none"/></svg><div class="a" style="left:353px;top:217px;width:1082px;height:618px;background:#fff;border:1px solid #cdcdcd"></div><div class="tab" style="left:353px;width:62px">计算规则</div><div class="tab" style="left:418px;width:60px">节点设置</div><div class="tab" style="left:481px;width:60px">箍筋设置</div><div class="tab" style="left:607px;width:60px">箍筋公式</div><div class="tabA" style="left:544px;width:60px">搭接设置</div><div class="a" style="left:363px;top:227px;width:1062px;height:575px;background:#fff;border:1px solid #c4c4c4"></div><div class="a" style="left:364px;top:228px;width:1007px;height:34px;background:#f0f0f0"></div><div class="a" style="left:364px;top:262px;width:22px;height:399px;background:#f0f0f0"></div><div class="a" style="left:386px;top:262px;width:985px;height:21px;background:#ffffcc"></div><div class="a" style="left:386px;top:367px;width:985px;height:21px;background:#ffffcc"></div><div class="a" style="left:386px;top:472px;width:985px;height:21px;background:#ffffcc"></div><div class="a" style="left:386px;top:577px;width:985px;height:21px;background:#ffffcc"></div><div class="a" style="left:386px;top:619px;width:985px;height:21px;background:#ffffcc"></div><div class="hl" style="left:364px;top:261px;width:1007px;background:#c8c8c8"></div><div class="hl" style="left:364px;top:282px;width:1007px;background:#d6d6d6"></div><div class="hl" style="left:364px;top:303px;width:1007px;background:#d6d6d6"></div><div class="hl" style="left:364px;top:324px;width:1007px;background:#d6d6d6"></div><div class="hl" style="left:364px;top:345px;width:1007px;background:#d6d6d6"></div><div class="hl" style="left:364px;top:366px;width:1007px;background:#d6d6d6"></div><div class="hl" style="left:364px;top:387px;width:1007px;background:#d6d6d6"></div><div class="hl" style="left:364px;top:408px;width:1007px;background:#d6d6d6"></div><div class="hl" style="left:364px;top:429px;width:1007px;background:#d6d6d6"></div><div class="hl" style="left:364px;top:450px;width:1007px;background:#d6d6d6"></div><div class="hl" style="left:364px;top:471px;width:1007px;background:#d6d6d6"></div><div class="hl" style="left:364px;top:492px;width:1007px;background:#d6d6d6"></div><div class="hl" style="left:364px;top:513px;width:1007px;background:#d6d6d6"></div><div class="hl" style="left:364px;top:534px;width:1007px;background:#d6d6d6"></div><div class="hl" style="left:364px;top:555px;width:1007px;background:#d6d6d6"></div><div class="hl" style="left:364px;top:576px;width:1007px;background:#d6d6d6"></div><div class="hl" style="left:364px;top:597px;width:1007px;background:#d6d6d6"></div><div class="hl" style="left:364px;top:618px;width:1007px;background:#d6d6d6"></div><div class="hl" style="left:364px;top:639px;width:1007px;background:#d6d6d6"></div><div class="hl" style="left:364px;top:660px;width:1007px;background:#d6d6d6"></div><div class="hl" style="left:661px;top:244px;width:568px;background:#d0d0d0"></div><div class="vl" style="left:385px;top:228px;height:433px;background:#d0d0d0"></div><div class="vl" style="left:661px;top:228px;height:433px;background:#d0d0d0"></div><div class="vl" style="left:732px;top:245px;height:416px;background:#d6d6d6"></div><div class="vl" style="left:803px;top:245px;height:416px;background:#d6d6d6"></div><div class="vl" style="left:874px;top:245px;height:416px;background:#d6d6d6"></div><div class="vl" style="left:945px;top:245px;height:416px;background:#d6d6d6"></div><div class="vl" style="left:1016px;top:245px;height:416px;background:#d6d6d6"></div><div class="vl" style="left:1087px;top:245px;height:416px;background:#d6d6d6"></div><div class="vl" style="left:1158px;top:245px;height:416px;background:#d6d6d6"></div><div class="vl" style="left:1229px;top:228px;height:433px;background:#d0d0d0"></div><div class="vl" style="left:1300px;top:228px;height:433px;background:#d0d0d0"></div><div class="vl" style="left:1371px;top:228px;height:433px;background:#d0d0d0"></div><div class="t c " style="left:374px;top:238px;width:300px;color:#444">钢筋直径范围</div><div class="t c " style="left:794px;top:229px;width:300px;color:#444">连接形式</div><div class="t c " style="left:549px;top:246px;width:300px;color:#444">基础</div><div class="t c " style="left:620px;top:246px;width:300px;color:#444">框架梁</div><div class="t c " style="left:691px;top:246px;width:300px;color:#444">非框架梁</div><div class="t c " style="left:762px;top:246px;width:300px;color:#444">柱</div><div class="t c " style="left:833px;top:246px;width:300px;color:#444">板</div><div class="t c " style="left:904px;top:246px;width:300px;color:#444">墙水平筋</div><div class="t c " style="left:975px;top:246px;width:300px;color:#444">墙垂直筋</div><div class="t c " style="left:1046px;top:246px;width:300px;color:#444">其它</div><div class="t c " style="left:1115px;top:229px;width:300px;color:#444">墙柱垂直筋</div><div class="t c " style="left:1115px;top:246px;width:300px;color:#444">定尺</div><div class="t c " style="left:1186px;top:229px;width:300px;color:#444">其余钢筋定</div><div class="t c " style="left:1186px;top:246px;width:300px;color:#444">尺</div><div class="t c " style="left:224px;top:265px;width:300px;color:#333">1</div><div class="a" style="left:389px;top:266px;width:11px;height:11px;border:1px solid #8a8a8a;border-radius:2px;background:#fff"></div><div class="a" style="left:392px;top:271px;width:5px;height:1px;background:#333"></div><div class="t " style="left:407px;top:265px;">HPB235,HPB300</div><div class="t c " style="left:224px;top:286px;width:300px;color:#333">2</div><div class="t " style="left:417px;top:286px;letter-spacing:0.7px">3~10</div><div class="t " style="left:665px;top:286px;">绑扎</div><div class="t " style="left:736px;top:286px;">绑扎</div><div class="t " style="left:807px;top:286px;">绑扎</div><div class="t " style="left:878px;top:286px;">绑扎</div><div class="t " style="left:949px;top:286px;">绑扎</div><div class="t " style="left:1020px;top:286px;">绑扎</div><div class="t " style="left:1091px;top:286px;">绑扎</div><div class="t " style="left:1162px;top:286px;">绑扎</div><div class="t " style="left:1233px;top:286px;letter-spacing:0.4px">8000</div><div class="t " style="left:1304px;top:286px;letter-spacing:0.4px">8000</div><div class="t c " style="left:224px;top:307px;width:300px;color:#333">3</div><div class="t " style="left:417px;top:307px;letter-spacing:0.7px">12~14</div><div class="t " style="left:665px;top:307px;">绑扎</div><div class="t " style="left:736px;top:307px;">绑扎</div><div class="t " style="left:807px;top:307px;">绑扎</div><div class="t " style="left:878px;top:307px;">绑扎</div><div class="t " style="left:949px;top:307px;">绑扎</div><div class="t " style="left:1020px;top:307px;">绑扎</div><div class="t " style="left:1091px;top:307px;">绑扎</div><div class="t " style="left:1162px;top:307px;">绑扎</div><div class="t " style="left:1233px;top:307px;letter-spacing:0.4px">10000</div><div class="t " style="left:1304px;top:307px;letter-spacing:0.4px">10000</div><div class="t c " style="left:224px;top:328px;width:300px;color:#333">4</div><div class="t " style="left:417px;top:328px;letter-spacing:0.7px">16~22</div><div class="t " style="left:665px;top:328px;">直螺纹连接</div><div class="t " style="left:736px;top:328px;">直螺纹连接</div><div class="t " style="left:807px;top:328px;">直螺纹连接</div><div class="t " style="left:878px;top:328px;">电渣压力焊</div><div class="t " style="left:949px;top:328px;">直螺纹连接</div><div class="t " style="left:1020px;top:328px;">直螺纹连接</div><div class="t " style="left:1091px;top:328px;">电渣压力焊</div><div class="t " style="left:1162px;top:328px;">电渣压力焊</div><div class="t " style="left:1233px;top:328px;letter-spacing:0.4px">10000</div><div class="t " style="left:1304px;top:328px;letter-spacing:0.4px">10000</div><div class="t c " style="left:224px;top:349px;width:300px;color:#333">5</div><div class="t " style="left:417px;top:349px;letter-spacing:0.7px">25~32</div><div class="t " style="left:665px;top:349px;">套管挤压</div><div class="t " style="left:736px;top:349px;">套管挤压</div><div class="t " style="left:807px;top:349px;">套管挤压</div><div class="t " style="left:878px;top:349px;">套管挤压</div><div class="t " style="left:949px;top:349px;">套管挤压</div><div class="t " style="left:1020px;top:349px;">套管挤压</div><div class="t " style="left:1091px;top:349px;">套管挤压</div><div class="t " style="left:1162px;top:349px;">套管挤压</div><div class="t " style="left:1233px;top:349px;letter-spacing:0.4px">10000</div><div class="t " style="left:1304px;top:349px;letter-spacing:0.4px">10000</div><div class="t c " style="left:224px;top:370px;width:300px;color:#333">6</div><div class="a" style="left:389px;top:371px;width:11px;height:11px;border:1px solid #8a8a8a;border-radius:2px;background:#fff"></div><div class="a" style="left:392px;top:376px;width:5px;height:1px;background:#333"></div><div class="t " style="left:407px;top:370px;letter-spacing:-0.13px">HRB335,HRB335E,HRBF335,HRBF335E</div><div class="t c " style="left:224px;top:391px;width:300px;color:#333">7</div><div class="t " style="left:417px;top:391px;letter-spacing:0.7px">3~10</div><div class="t " style="left:665px;top:391px;">绑扎</div><div class="t " style="left:736px;top:391px;">绑扎</div><div class="t " style="left:807px;top:391px;">绑扎</div><div class="t " style="left:878px;top:391px;">绑扎</div><div class="t " style="left:949px;top:391px;">绑扎</div><div class="t " style="left:1020px;top:391px;">绑扎</div><div class="t " style="left:1091px;top:391px;">绑扎</div><div class="t " style="left:1162px;top:391px;">绑扎</div><div class="t " style="left:1233px;top:391px;letter-spacing:0.4px">8000</div><div class="t " style="left:1304px;top:391px;letter-spacing:0.4px">8000</div><div class="t c " style="left:224px;top:412px;width:300px;color:#333">8</div><div class="t " style="left:417px;top:412px;letter-spacing:0.7px">12~14</div><div class="t " style="left:665px;top:412px;">绑扎</div><div class="t " style="left:736px;top:412px;">绑扎</div><div class="t " style="left:807px;top:412px;">绑扎</div><div class="t " style="left:878px;top:412px;">绑扎</div><div class="t " style="left:949px;top:412px;">绑扎</div><div class="t " style="left:1020px;top:412px;">绑扎</div><div class="t " style="left:1091px;top:412px;">绑扎</div><div class="t " style="left:1162px;top:412px;">绑扎</div><div class="t " style="left:1233px;top:412px;letter-spacing:0.4px">10000</div><div class="t " style="left:1304px;top:412px;letter-spacing:0.4px">10000</div><div class="t c " style="left:224px;top:433px;width:300px;color:#333">9</div><div class="t " style="left:417px;top:433px;letter-spacing:0.7px">16~22</div><div class="t " style="left:665px;top:433px;">直螺纹连接</div><div class="t " style="left:736px;top:433px;">直螺纹连接</div><div class="t " style="left:807px;top:433px;">直螺纹连接</div><div class="t " style="left:878px;top:433px;">电渣压力焊</div><div class="t " style="left:949px;top:433px;">直螺纹连接</div><div class="t " style="left:1020px;top:433px;">直螺纹连接</div><div class="t " style="left:1091px;top:433px;">电渣压力焊</div><div class="t " style="left:1162px;top:433px;">电渣压力焊</div><div class="t " style="left:1233px;top:433px;letter-spacing:0.4px">10000</div><div class="t " style="left:1304px;top:433px;letter-spacing:0.4px">10000</div><div class="t c " style="left:224px;top:454px;width:300px;color:#333">10</div><div class="t " style="left:417px;top:454px;letter-spacing:0.7px">25~50</div><div class="t " style="left:665px;top:454px;">套管挤压</div><div class="t " style="left:736px;top:454px;">套管挤压</div><div class="t " style="left:807px;top:454px;">套管挤压</div><div class="t " style="left:878px;top:454px;">套管挤压</div><div class="t " style="left:949px;top:454px;">套管挤压</div><div class="t " style="left:1020px;top:454px;">套管挤压</div><div class="t " style="left:1091px;top:454px;">套管挤压</div><div class="t " style="left:1162px;top:454px;">套管挤压</div><div class="t " style="left:1233px;top:454px;letter-spacing:0.4px">10000</div><div class="t " style="left:1304px;top:454px;letter-spacing:0.4px">10000</div><div class="t c " style="left:224px;top:475px;width:300px;color:#333">11</div><div class="a" style="left:389px;top:476px;width:11px;height:11px;border:1px solid #8a8a8a;border-radius:2px;background:#fff"></div><div class="a" style="left:392px;top:481px;width:5px;height:1px;background:#333"></div><div class="t " style="left:407px;top:475px;letter-spacing:-0.13px">HRB400,HRB400E,HRBF400,HRBF400E,RR...</div><div class="t c " style="left:224px;top:496px;width:300px;color:#333">12</div><div class="t " style="left:417px;top:496px;letter-spacing:0.7px">3~10</div><div class="t " style="left:665px;top:496px;">绑扎</div><div class="t " style="left:736px;top:496px;">绑扎</div><div class="t " style="left:807px;top:496px;">绑扎</div><div class="t " style="left:878px;top:496px;">绑扎</div><div class="t " style="left:949px;top:496px;">绑扎</div><div class="t " style="left:1020px;top:496px;">绑扎</div><div class="t " style="left:1091px;top:496px;">绑扎</div><div class="t " style="left:1162px;top:496px;">绑扎</div><div class="t " style="left:1233px;top:496px;letter-spacing:0.4px">8000</div><div class="t " style="left:1304px;top:496px;letter-spacing:0.4px">8000</div><div class="t c " style="left:224px;top:517px;width:300px;color:#333">13</div><div class="t " style="left:417px;top:517px;letter-spacing:0.7px">12~14</div><div class="t " style="left:665px;top:517px;">绑扎</div><div class="t " style="left:736px;top:517px;">绑扎</div><div class="t " style="left:807px;top:517px;">绑扎</div><div class="t " style="left:878px;top:517px;">绑扎</div><div class="t " style="left:949px;top:517px;">绑扎</div><div class="t " style="left:1020px;top:517px;">绑扎</div><div class="t " style="left:1091px;top:517px;">绑扎</div><div class="t " style="left:1162px;top:517px;">绑扎</div><div class="t " style="left:1233px;top:517px;letter-spacing:0.4px">10000</div><div class="t " style="left:1304px;top:517px;letter-spacing:0.4px">10000</div><div class="t c " style="left:224px;top:538px;width:300px;color:#333">14</div><div class="t " style="left:417px;top:538px;letter-spacing:0.7px">16~22</div><div class="t " style="left:665px;top:538px;">直螺纹连接</div><div class="t " style="left:736px;top:538px;">直螺纹连接</div><div class="t " style="left:807px;top:538px;">直螺纹连接</div><div class="t " style="left:878px;top:538px;">电渣压力焊</div><div class="t " style="left:949px;top:538px;">直螺纹连接</div><div class="t " style="left:1020px;top:538px;">直螺纹连接</div><div class="t " style="left:1091px;top:538px;">电渣压力焊</div><div class="t " style="left:1162px;top:538px;">电渣压力焊</div><div class="t " style="left:1233px;top:538px;letter-spacing:0.4px">10000</div><div class="t " style="left:1304px;top:538px;letter-spacing:0.4px">10000</div><div class="t c " style="left:224px;top:559px;width:300px;color:#333">15</div><div class="t " style="left:417px;top:559px;letter-spacing:0.7px">25~50</div><div class="t " style="left:665px;top:559px;">套管挤压</div><div class="t " style="left:736px;top:559px;">套管挤压</div><div class="t " style="left:807px;top:559px;">套管挤压</div><div class="t " style="left:878px;top:559px;">套管挤压</div><div class="t " style="left:949px;top:559px;">套管挤压</div><div class="t " style="left:1020px;top:559px;">套管挤压</div><div class="t " style="left:1091px;top:559px;">套管挤压</div><div class="t " style="left:1162px;top:559px;">套管挤压</div><div class="t " style="left:1233px;top:559px;letter-spacing:0.4px">10000</div><div class="t " style="left:1304px;top:559px;letter-spacing:0.4px">10000</div><div class="t c " style="left:224px;top:580px;width:300px;color:#333">16</div><div class="a" style="left:389px;top:581px;width:11px;height:11px;border:1px solid #8a8a8a;border-radius:2px;background:#fff"></div><div class="a" style="left:392px;top:586px;width:5px;height:1px;background:#333"></div><div class="t " style="left:407px;top:580px;">冷轧带肋钢筋</div><div class="t c " style="left:224px;top:601px;width:300px;color:#333">17</div><div class="t " style="left:417px;top:601px;letter-spacing:0.7px">4~12</div><div class="t " style="left:665px;top:601px;">绑扎</div><div class="t " style="left:736px;top:601px;">绑扎</div><div class="t " style="left:807px;top:601px;">绑扎</div><div class="t " style="left:878px;top:601px;">绑扎</div><div class="t " style="left:949px;top:601px;">绑扎</div><div class="t " style="left:1020px;top:601px;">绑扎</div><div class="t " style="left:1091px;top:601px;">绑扎</div><div class="t " style="left:1162px;top:601px;">绑扎</div><div class="t " style="left:1233px;top:601px;letter-spacing:0.4px">8000</div><div class="t " style="left:1304px;top:601px;letter-spacing:0.4px">8000</div><div class="t c " style="left:224px;top:622px;width:300px;color:#333">18</div><div class="a" style="left:389px;top:623px;width:11px;height:11px;border:1px solid #8a8a8a;border-radius:2px;background:#fff"></div><div class="a" style="left:392px;top:628px;width:5px;height:1px;background:#333"></div><div class="t " style="left:407px;top:622px;">冷轧扭钢筋</div><div class="t c " style="left:224px;top:643px;width:300px;color:#333">19</div><div class="t " style="left:417px;top:643px;letter-spacing:0.7px">6.5~14</div><div class="t " style="left:665px;top:643px;">绑扎</div><div class="t " style="left:736px;top:643px;">绑扎</div><div class="t " style="left:807px;top:643px;">绑扎</div><div class="t " style="left:878px;top:643px;">绑扎</div><div class="t " style="left:949px;top:643px;">绑扎</div><div class="t " style="left:1020px;top:643px;">绑扎</div><div class="t " style="left:1091px;top:643px;">绑扎</div><div class="t " style="left:1162px;top:643px;">绑扎</div><div class="t " style="left:1233px;top:643px;letter-spacing:0.4px">8000</div><div class="t " style="left:1304px;top:643px;letter-spacing:0.4px">8000</div><div class="vl" style="left:394px;top:278px;height:78px;background:#e2e2e2"></div><div class="hl" style="left:394px;top:292px;width:17px;background:#e2e2e2"></div><div class="hl" style="left:394px;top:313px;width:17px;background:#e2e2e2"></div><div class="hl" style="left:394px;top:334px;width:17px;background:#e2e2e2"></div><div class="hl" style="left:394px;top:355px;width:17px;background:#e2e2e2"></div><div class="vl" style="left:394px;top:383px;height:78px;background:#e2e2e2"></div><div class="hl" style="left:394px;top:397px;width:17px;background:#e2e2e2"></div><div class="hl" style="left:394px;top:418px;width:17px;background:#e2e2e2"></div><div class="hl" style="left:394px;top:439px;width:17px;background:#e2e2e2"></div><div class="hl" style="left:394px;top:460px;width:17px;background:#e2e2e2"></div><div class="vl" style="left:394px;top:488px;height:78px;background:#e2e2e2"></div><div class="hl" style="left:394px;top:502px;width:17px;background:#e2e2e2"></div><div class="hl" style="left:394px;top:523px;width:17px;background:#e2e2e2"></div><div class="hl" style="left:394px;top:544px;width:17px;background:#e2e2e2"></div><div class="hl" style="left:394px;top:565px;width:17px;background:#e2e2e2"></div><div class="vl" style="left:394px;top:593px;height:15px;background:#e2e2e2"></div><div class="hl" style="left:394px;top:607px;width:17px;background:#e2e2e2"></div><div class="vl" style="left:394px;top:635px;height:15px;background:#e2e2e2"></div><div class="hl" style="left:394px;top:649px;width:17px;background:#e2e2e2"></div><div class="a" style="left:364px;top:809px;width:14px;height:14px;background:#fff;border:1px solid #8a8a8a;border-radius:2px"></div><div class="t " style="left:381px;top:809px;">单（双）面焊统计搭接长度</div><div class="btn" style="left:353px">导入规则</div><div class="btn" style="left:439px">导出规则</div><div class="btn" style="left:525px">恢复默认值</div><svg class="a" style="left:1433px;top:866px" width="10" height="10"><g fill="#7d7d7d"><rect x="7" y="1" width="2" height="2"/><rect x="4" y="4" width="2" height="2"/><rect x="7" y="4" width="2" height="2"/><rect x="1" y="7" width="2" height="2"/><rect x="4" y="7" width="2" height="2"/><rect x="7" y="7" width="2" height="2"/></g></svg><div class="red" style="left:169px;top:23px;width:109px;height:90px"></div><div class="red" style="left:526px;top:165px;width:99px;height:70px"></div><div class="red" style="left:599px;top:278px;width:700px;height:112px"></div><div class="red" style="left:1285px;top:262px;width:112px;height:413px"></div><div class="red" style="left:612px;top:436px;width:706px;height:177px"></div></body></html>
